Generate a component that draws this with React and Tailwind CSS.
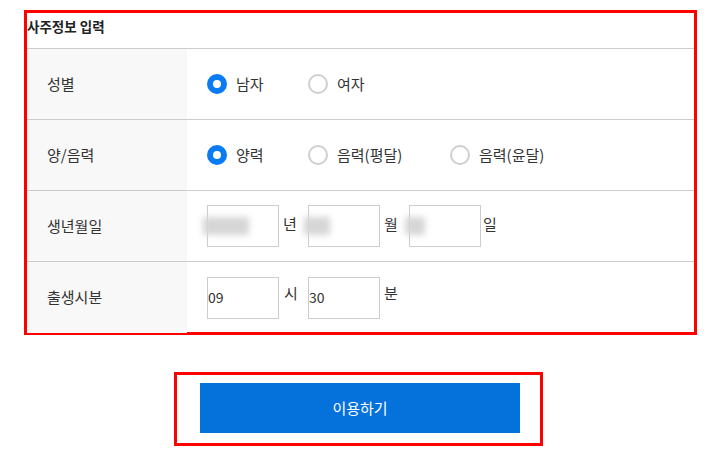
import React from "react";

const font = { fontFamily: '"Noto Sans CJK KR", "Noto Sans", sans-serif' };

function Radio({ checked, label }) {
  return (
    <div className="flex items-center">
      {checked ? (
        <span className="w-[20px] h-[20px] rounded-full border-[6px] border-[#0a7bf3] bg-white box-border" />
      ) : (
        <span className="w-[20px] h-[20px] rounded-full border-2 border-[#cfcfcf] bg-white box-border" />
      )}
      <span className="ml-[9px] text-[15px] text-[#333]">{label}</span>
    </div>
  );
}

function Box({ children, blur }) {
  return (
    <div className="w-[72px] h-[42px] border border-[#cccccc] flex items-center bg-white">
      {blur ? (
        <span className={"-ml-[5px] h-[18px] bg-[#d6d6d6] blur-[3px] " + blur} />
      ) : (
        <span className="text-[14px] text-[#333]">{children}</span>
      )}
    </div>
  );
}

function Row({ label, children, last }) {
  return (
    <div className={"flex h-[71px] " + (last ? "h-[70px]" : "border-b border-[#cccccc]")}>
      <div className="w-[160px] bg-[#f8f8f8] flex items-center pl-[20px] text-[15px] text-[#333]">
        {label}
      </div>
      <div className="flex-1 flex items-center pl-[20px]">{children}</div>
    </div>
  );
}

export default function App() {
  return (
    <div className="w-[706px] h-[454px] bg-white" style={font}>
      <div className="pt-[10px] pl-[24px]">
        <div className="w-[673px] h-[325px] border-[3px] border-[#ff0000] box-border">
          <div className="h-[36px] border-b border-[#cccccc] text-[13.5px] font-bold text-[#222] pt-[4px] leading-[18px]">
            사주정보 입력
          </div>
          <Row label="성별">
            <div className="w-[101px]"><Radio checked label="남자" /></div>
            <Radio label="여자" />
          </Row>
          <Row label="양/음력">
            <div className="w-[101px]"><Radio checked label="양력" /></div>
            <div className="w-[142px]"><Radio label="음력(평달)" /></div>
            <Radio label="음력(윤달)" />
          </Row>
          <Row label="생년월일">
            <Box blur="w-[46px]" />
            <span className="ml-[4px] w-[25px] text-[15px] text-[#333] -mt-[4px]">년</span>
            <Box blur="w-[26px]" />
            <span className="ml-[4px] w-[25px] text-[15px] text-[#333] -mt-[4px]">월</span>
            <Box blur="w-[20px]" />
            <span className="ml-[2px] text-[15px] text-[#333] -mt-[4px]">일</span>
          </Row>
          <Row label="출생시분" last>
            <Box>09</Box>
            <span className="ml-[5px] w-[24px] text-[15px] text-[#333] -mt-[8px]">시</span>
            <Box>30</Box>
            <span className="ml-[4px] text-[15px] text-[#333] -mt-[8px]">분</span>
          </Row>
        </div>
      </div>
      <div className="flex justify-center pt-[37px] pl-[11px]">
        <div className="w-[369px] h-[74px] border-[3px] border-[#ff0000] box-border pl-[23px] pt-[8px]">
          <button className="w-[320px] h-[50px] bg-[#0571da] text-white text-[15px] flex items-center justify-center">
            이용하기
          </button>
        </div>
      </div>
    </div>
  );
}
